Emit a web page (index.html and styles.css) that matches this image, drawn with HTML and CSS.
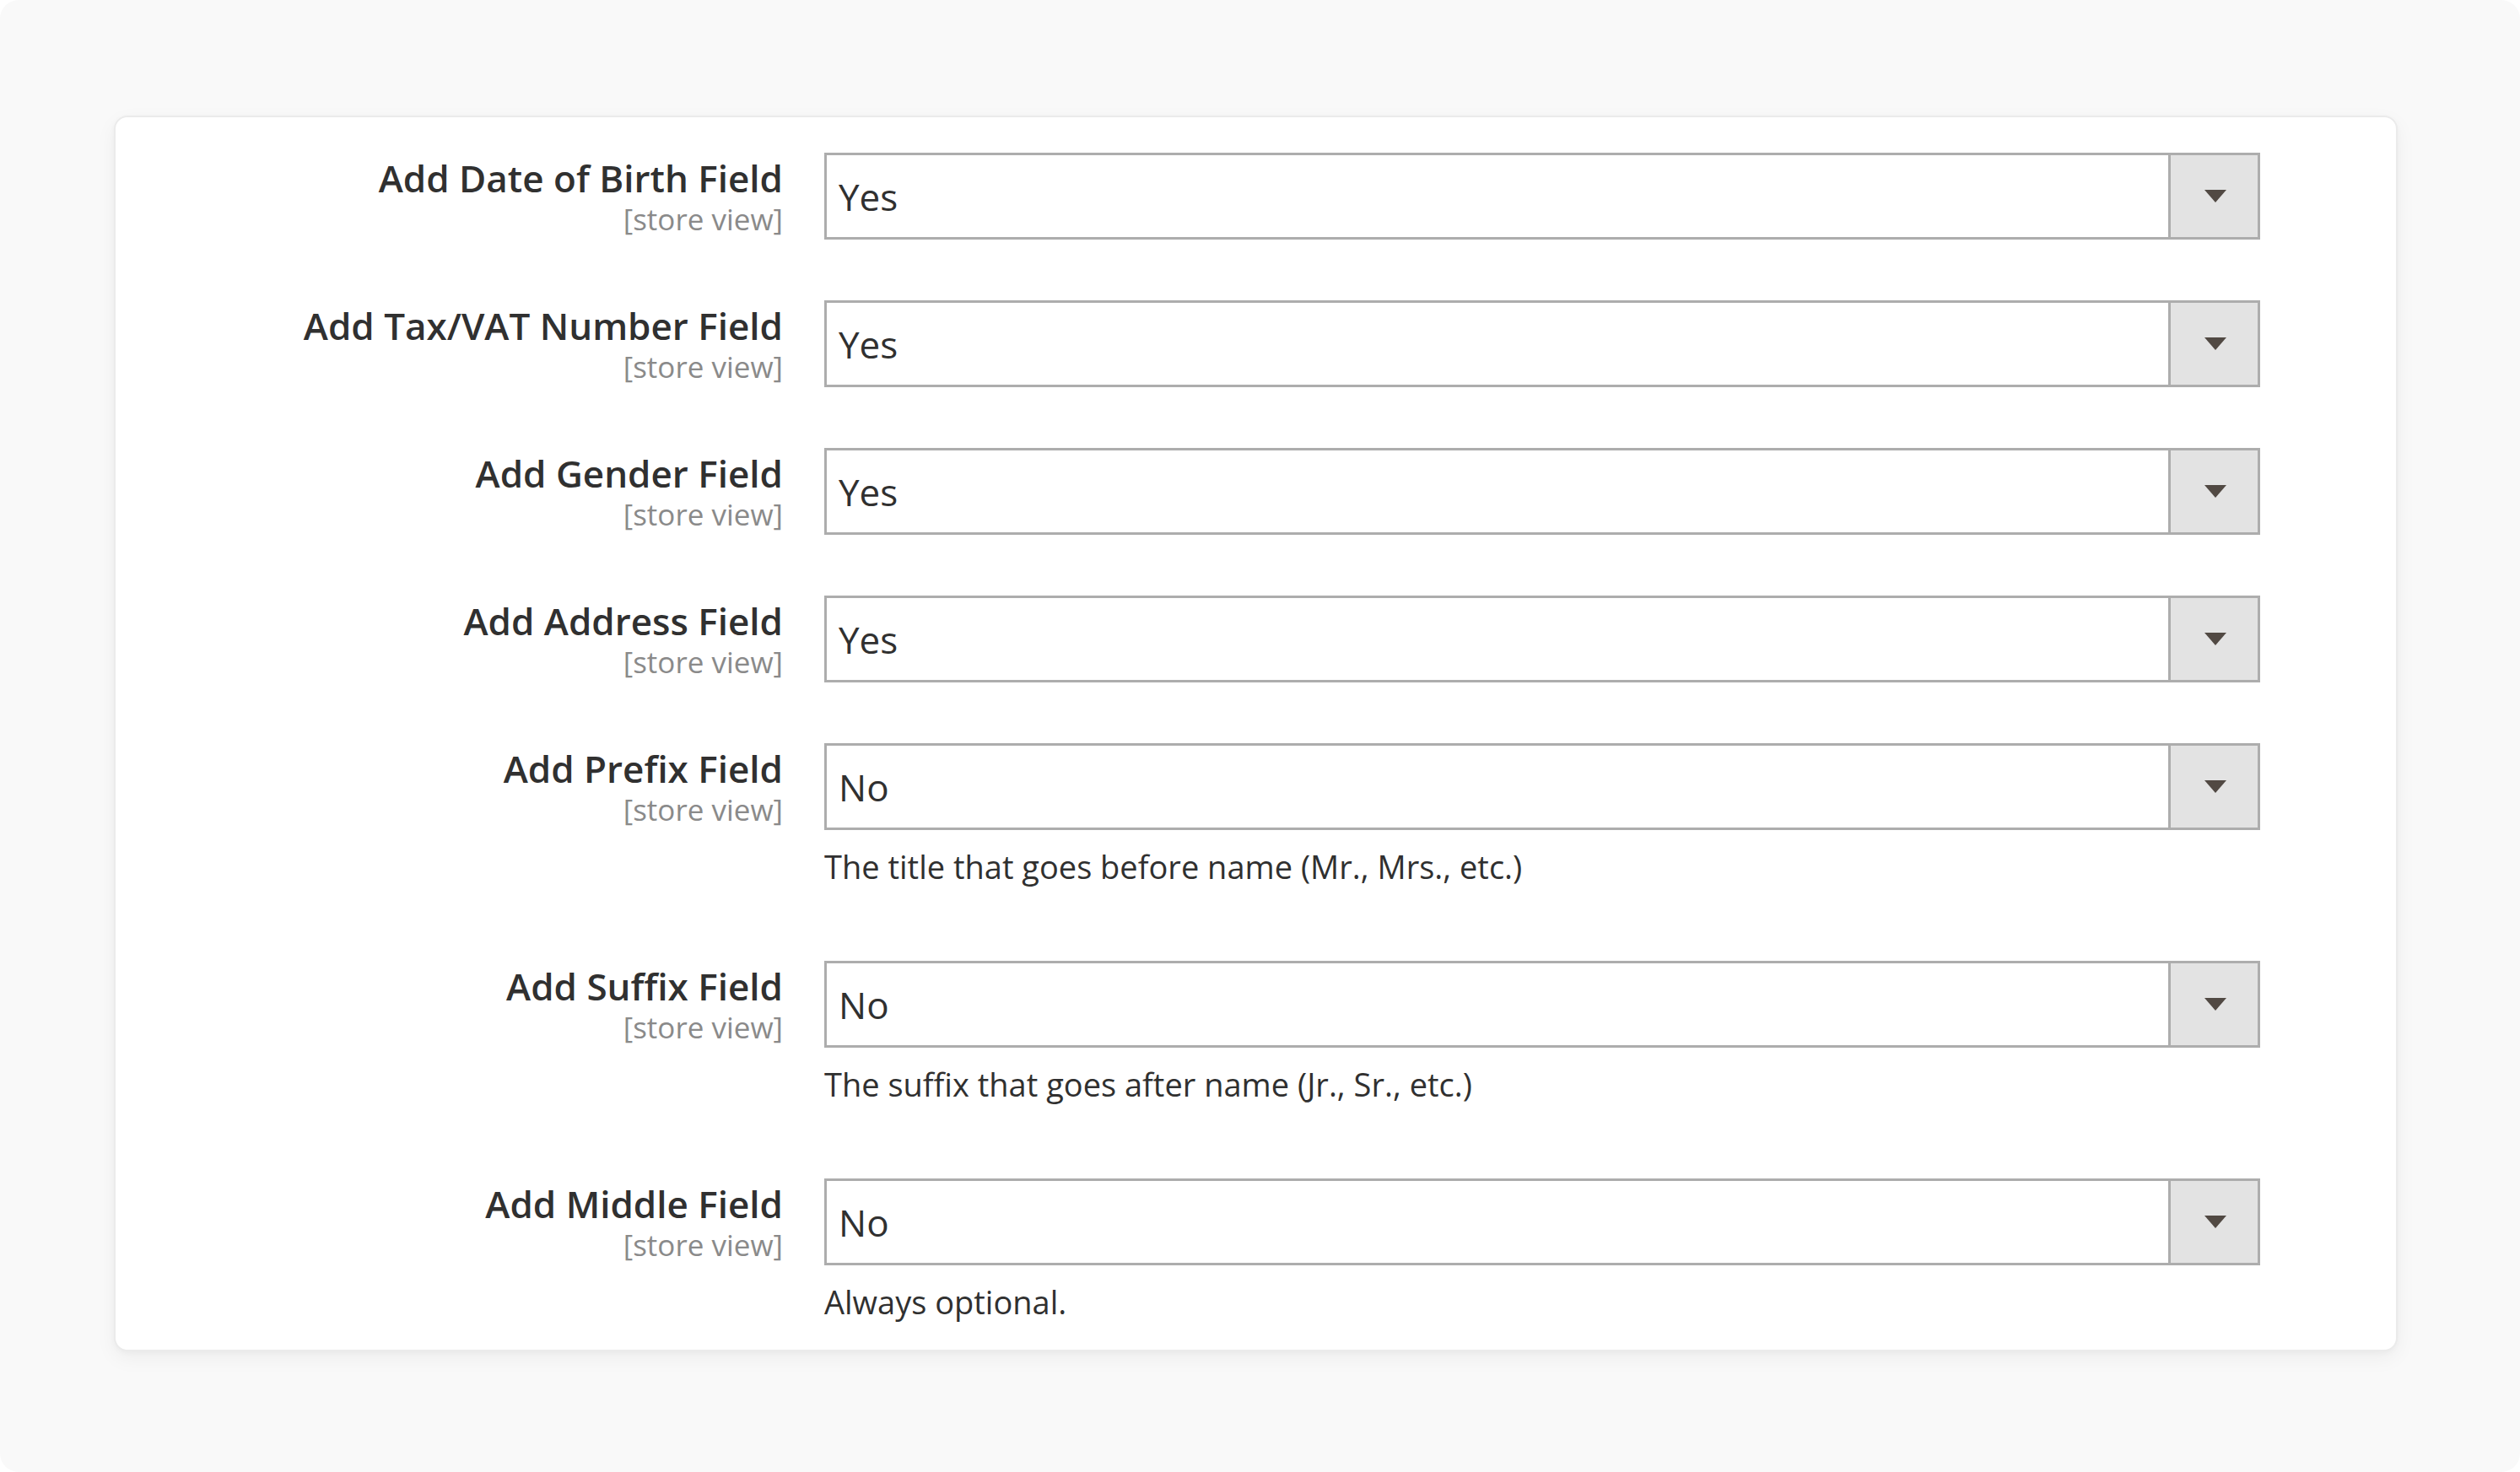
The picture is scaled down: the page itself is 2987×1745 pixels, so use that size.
FILE: index.html
```html
<!DOCTYPE html>
<html lang="en">
<head>
<meta charset="utf-8">
<title>Name and Address Options</title>
<link rel="stylesheet" href="styles.css">
</head>
<body>
<div class="page">
  <section class="card">
    <div class="row">
      <div class="label"><span class="title">Add Date of Birth Field</span><span class="scope">[store view]</span></div>
      <div class="control">
        <div class="select"><span class="value">Yes</span><span class="btn"><svg width="26" height="15" viewBox="0 0 26 15"><path d="M0 0H26L13 15Z" fill="#514943"/></svg></span></div>
      </div>
    </div>
    <div class="row">
      <div class="label"><span class="title">Add Tax/VAT Number Field</span><span class="scope">[store view]</span></div>
      <div class="control">
        <div class="select"><span class="value">Yes</span><span class="btn"><svg width="26" height="15" viewBox="0 0 26 15"><path d="M0 0H26L13 15Z" fill="#514943"/></svg></span></div>
      </div>
    </div>
    <div class="row">
      <div class="label"><span class="title">Add Gender Field</span><span class="scope">[store view]</span></div>
      <div class="control">
        <div class="select"><span class="value">Yes</span><span class="btn"><svg width="26" height="15" viewBox="0 0 26 15"><path d="M0 0H26L13 15Z" fill="#514943"/></svg></span></div>
      </div>
    </div>
    <div class="row">
      <div class="label"><span class="title">Add Address Field</span><span class="scope">[store view]</span></div>
      <div class="control">
        <div class="select"><span class="value">Yes</span><span class="btn"><svg width="26" height="15" viewBox="0 0 26 15"><path d="M0 0H26L13 15Z" fill="#514943"/></svg></span></div>
      </div>
    </div>
    <div class="row has-note">
      <div class="label"><span class="title">Add Prefix Field</span><span class="scope">[store view]</span></div>
      <div class="control">
        <div class="select"><span class="value">No</span><span class="btn"><svg width="26" height="15" viewBox="0 0 26 15"><path d="M0 0H26L13 15Z" fill="#514943"/></svg></span></div>
        <p class="note">The title that goes before name (Mr., Mrs., etc.)</p>
      </div>
    </div>
    <div class="row has-note">
      <div class="label"><span class="title">Add Suffix Field</span><span class="scope">[store view]</span></div>
      <div class="control">
        <div class="select"><span class="value">No</span><span class="btn"><svg width="26" height="15" viewBox="0 0 26 15"><path d="M0 0H26L13 15Z" fill="#514943"/></svg></span></div>
        <p class="note">The suffix that goes after name (Jr., Sr., etc.)</p>
      </div>
    </div>
    <div class="row has-note last">
      <div class="label"><span class="title">Add Middle Field</span><span class="scope">[store view]</span></div>
      <div class="control">
        <div class="select"><span class="value">No</span><span class="btn"><svg width="26" height="15" viewBox="0 0 26 15"><path d="M0 0H26L13 15Z" fill="#514943"/></svg></span></div>
        <p class="note">Always optional.</p>
      </div>
    </div>
  </section>
</div>
</body>
</html>
```
FILE: styles.css
```css
html {
  background: #ffffff;
}
body {
  margin: 0;
  font-family: "Open Sans", "Noto Sans", sans-serif;
  color: #303030;
}
.page {
  width: 2987px;
  height: 1745px;
  box-sizing: border-box;
  background: #f9f9f9;
  border-radius: 22px;
  padding: 137px 0 0 135px;
  overflow: hidden;
}
.card {
  width: 2707px;
  height: 1465px;
  box-sizing: border-box;
  background: #ffffff;
  border: 2px solid #ebebeb;
  border-radius: 16px;
  box-shadow: 0 8px 24px rgba(0, 0, 0, 0.05), 0 2px 6px rgba(0, 0, 0, 0.03);
  padding-top: 42px;
}
.row {
  display: grid;
  grid-template-columns: 791px 1702px;
  column-gap: 49px;
  margin-bottom: 72px;
}
.row.has-note {
  margin-bottom: 84px;
}
.row.last {
  margin-bottom: 0;
}
.label {
  display: flex;
  flex-direction: column;
  align-items: flex-end;
  text-align: right;
  margin-top: 0;
}
.title {
  font-size: 44px;
  font-weight: 600;
  line-height: 60px;
  color: #303030;
}
.scope {
  font-size: 35px;
  line-height: 38px;
  color: #8a8a8a;
}
.select {
  display: flex;
  align-items: stretch;
  height: 103px;
  box-sizing: border-box;
  border: 3px solid #adadad;
  background: #ffffff;
}
.value {
  flex: 1;
  display: flex;
  align-items: center;
  padding-left: 14px;
  font-size: 44px;
  color: #303030;
}
.btn {
  width: 103px;
  border-left: 3px solid #adadad;
  background: #e3e3e3;
  display: flex;
  align-items: center;
  justify-content: center;
}
.btn svg {
  margin-left: 3px;
}
.note {
  margin: 15px 0 0;
  font-size: 38px;
  line-height: 56px;
  color: #303030;
}
```
